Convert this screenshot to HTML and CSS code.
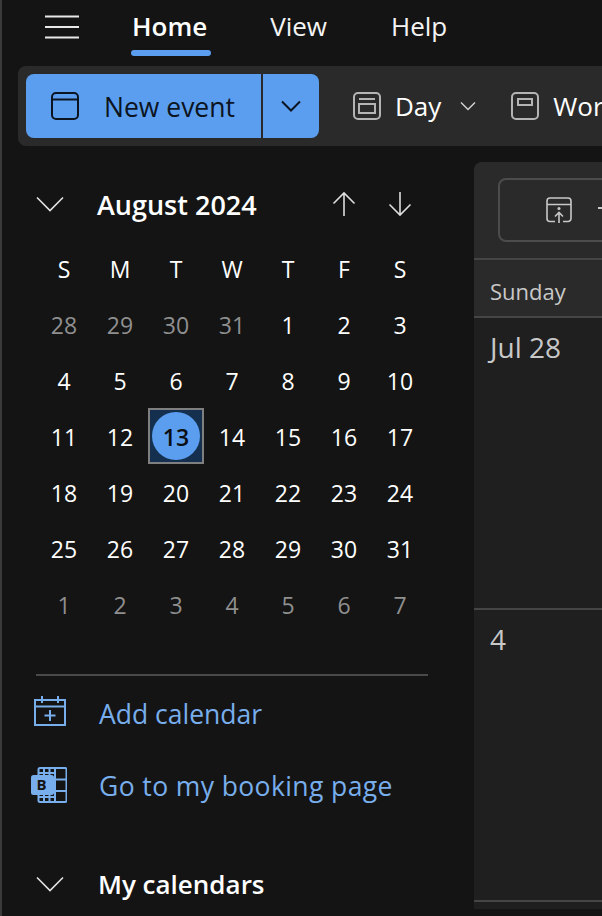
FILE: index.html
```html
<!DOCTYPE html>
<html lang="en">
<head>
    <meta charset="UTF-8">
    <meta name="viewport" content="width=device-width, initial-scale=1.0">
    <title>Calendar</title>
    <link rel="stylesheet" href="styles.css">
</head>
<body>
    <div class="app">
        <nav class="tabs">
            <svg class="menu-icon" width="34" height="24" viewBox="0 0 34 24"><path d="M0 1.5h34M0 12h34M0 22.5h34" fill="none" stroke="#e8e8e8" stroke-width="2"/></svg>
            <span class="tab active">Home</span>
            <span class="tab">View</span>
            <span class="tab">Help</span>
        </nav>

        <div class="ribbon">
            <div class="new-event">
                <div class="new-main">
                    <svg width="28" height="28" viewBox="0 0 28 28" fill="none" stroke="#0b1420" stroke-width="2"><rect x="1" y="1" width="26" height="26" rx="4"/><path d="M1 7.5h26"/></svg>
                    <span>New event</span>
                </div>
                <div class="new-drop">
                    <svg width="20" height="12" viewBox="0 0 20 12" fill="none" stroke="#0b1420" stroke-width="2"><path d="M1 1.5l9 9 9-9"/></svg>
                </div>
            </div>
            <div class="rib-item">
                <svg width="28" height="28" viewBox="0 0 28 28" fill="none" stroke="#b4b4b4" stroke-width="2"><rect x="1" y="1" width="26" height="26" rx="4"/><path d="M6 7h16"/><rect x="6" y="12" width="16" height="9"/></svg>
                <span>Day</span>
                <svg class="day-caret" width="16" height="10" viewBox="0 0 16 10" fill="none" stroke="#d0d0d0" stroke-width="1.5"><path d="M1 1.5l7 7 7-7"/></svg>
            </div>
            <div class="rib-item">
                <svg width="28" height="28" viewBox="0 0 28 28" fill="none" stroke="#b4b4b4" stroke-width="2"><rect x="1" y="1" width="26" height="26" rx="4"/><rect x="7" y="7" width="14" height="6"/></svg>
                <span>Work week</span>
            </div>
        </div>

        <div class="content">
            <aside class="side">
                <div class="month-head">
                    <svg width="28" height="16" viewBox="0 0 28 16" fill="none" stroke="#e4e4e4" stroke-width="1.6"><path d="M1 1.5l13 13 13-13"/></svg>
                    <span class="month-title">August 2024</span>
                    <div class="month-arrows">
                        <svg width="24" height="26" viewBox="0 0 24 26" fill="none" stroke="#dcdcdc" stroke-width="1.6"><path d="M12 25V2M1.5 12.5L12 2l10.5 10.5"/></svg>
                        <svg width="24" height="26" viewBox="0 0 24 26" fill="none" stroke="#dcdcdc" stroke-width="1.6"><path d="M12 1v23M1.5 13.5L12 24l10.5-10.5"/></svg>
                    </div>
                </div>

                <div class="month-grid">
                    <span class="wd">S</span><span class="wd">M</span><span class="wd">T</span><span class="wd">W</span><span class="wd">T</span><span class="wd">F</span><span class="wd">S</span>
                    <span class="d off">28</span><span class="d off">29</span><span class="d off">30</span><span class="d off">31</span><span class="d">1</span><span class="d">2</span><span class="d">3</span>
                    <span class="d">4</span><span class="d">5</span><span class="d">6</span><span class="d">7</span><span class="d">8</span><span class="d">9</span><span class="d">10</span>
                    <span class="d">11</span><span class="d">12</span><span class="d today"><b>13</b></span><span class="d">14</span><span class="d">15</span><span class="d">16</span><span class="d">17</span>
                    <span class="d">18</span><span class="d">19</span><span class="d">20</span><span class="d">21</span><span class="d">22</span><span class="d">23</span><span class="d">24</span>
                    <span class="d">25</span><span class="d">26</span><span class="d">27</span><span class="d">28</span><span class="d">29</span><span class="d">30</span><span class="d">31</span>
                    <span class="d off">1</span><span class="d off">2</span><span class="d off">3</span><span class="d off">4</span><span class="d off">5</span><span class="d off">6</span><span class="d off">7</span>
                </div>

                <div class="side-links">
                    <div class="link link-add">
                        <svg width="32" height="30" viewBox="0 0 32 30" fill="none" stroke="#78aeec" stroke-width="2"><rect x="1" y="4" width="30" height="25"/><path d="M1 10.5h30M8 0v7M24 0v7M16 14v11M10.500 19.500h11"/></svg>
                        <span>Add calendar</span>
                    </div>
                    <div class="link link-book">
                        <svg width="36" height="36" viewBox="0 0 36 36"><path d="M9 1h25a1.500 1.500 0 0 1 1.500 1.500v31a1.500 1.500 0 0 1-1.500 1.500H9a1.500 1.500 0 0 1-1.500-1.500V2.500A1.500 1.500 0 0 1 9 1z" fill="none" stroke="#78aeec" stroke-width="2"/><path d="M13 1v34M18.500 1v34M24 1v34M24 12.500h11M24 24h11M8 6h16M8 30h16" stroke="#78aeec" stroke-width="2" fill="none"/><rect x="0" y="8" width="23" height="20" rx="2.500" fill="#78aeec"/><text x="5.500" y="23" class="book-b">B</text></svg>
                        <span>Go to my booking page</span>
                    </div>
                </div>

                <div class="my-cals">
                    <svg width="28" height="16" viewBox="0 0 28 16" fill="none" stroke="#e4e4e4" stroke-width="1.6"><path d="M1 1.500l13 13 13-13"/></svg>
                    <span>My calendars</span>
                </div>
            </aside>

            <main class="panel">
                <div class="panel-tools">
                    <div class="share-btn">
                        <svg width="26" height="26" viewBox="0 0 26 26" fill="none" stroke="#c8c8c8" stroke-width="1.600"><path d="M9 24.500H4a3 3 0 0 1-3-3V4a3 3 0 0 1 3-3h18a3 3 0 0 1 3 3v17.500a3 3 0 0 1-3 3h-5M1 7.500h24M13 26V16M9 19.500l4-4 4 4"/><circle cx="13" cy="11.500" r=".8" fill="#c8c8c8"/></svg>
                        <i class="plus-stub"></i>
                    </div>
                </div>
                <div class="day-head">Sunday</div>
                <div class="day-cell">Jul 28</div>
                <div class="day-cell">4</div>
            </main>
        </div>
    </div>
</body>
</html>
```

FILE: styles.css
```css
* {
    box-sizing: border-box;
}
html, body {
    height: 100%;
    margin: 0;
}
body {
    font-family: "Open Sans", "Noto Sans", sans-serif;
    background: #141414;
    color: #fff;
    overflow: hidden;
}
.app {
    width: 602px;
    height: 916px;
    border-left: 2px solid #3b3b3b;
    overflow: hidden;
}

/* top tabs */
.tabs {
    display: flex;
    align-items: center;
    height: 66px;
    padding: 0 0 12px 43px;
}
.menu-icon {
    margin-right: 53px;
}
.tab {
    position: relative;
    top: -1px;
    font-size: 26px;
    margin-right: 64px;
    color: #f4f4f4;
}
.tab.active {
    font-weight: 600;
    margin-right: 63px;
    color: #fff;
}
.tab.active::after {
    content: "";
    position: absolute;
    left: -1px;
    right: -4px;
    bottom: -12px;
    height: 6px;
    border-radius: 3px;
    background: #5b9ef0;
}

/* ribbon */
.ribbon {
    display: flex;
    align-items: center;
    height: 80px;
    margin-left: 16px;
    padding-left: 8px;
    background: #2a2a2a;
    border-radius: 8px 0 0 8px;
    white-space: nowrap;
}
.new-event {
    display: flex;
    flex: none;
    width: 293px;
    height: 64px;
    background: #5b9ef0;
    border-radius: 8px;
    color: #0b1420;
    font-size: 26.5px;
}
.new-main {
    display: flex;
    align-items: center;
    gap: 25px;
    width: 237px;
    padding-left: 25px;
    border-right: 2px solid #2a2a2a;
}
.new-main span {
    padding-top: 2px;
}
.new-drop {
    display: flex;
    align-items: center;
    justify-content: center;
    flex: 1;
}
.rib-item {
    display: flex;
    flex: none;
    align-items: center;
    gap: 14px;
    margin-left: 34px;
    font-size: 26px;
}
.rib-item + .rib-item {
    margin-left: 35px;
}
.day-caret {
    margin-left: 5px;
}

/* left column */
.content {
    display: flex;
    padding-top: 16px;
}
.side {
    width: 472px;
    flex: none;
    padding: 15px 0 0 34px;
}
.month-head {
    display: flex;
    align-items: center;
    width: 392px;
    height: 54px;
}
.month-title {
    font-size: 27px;
    font-weight: 600;
    margin-left: 33px;
}
.month-arrows {
    display: flex;
    gap: 32px;
    margin-left: auto;
    margin-right: 16px;
}
.month-grid {
    display: grid;
    grid-template-columns: repeat(7, 56px);
    grid-auto-rows: 56px;
    margin-top: 9px;
    width: 392px;
    padding-bottom: 42px;
    border-bottom: 2px solid #4a4a4a;
    font-size: 23px;
}
.wd, .d {
    display: flex;
    align-items: center;
    justify-content: center;
    padding-top: 2px;
}
.off {
    color: #8f8f8f;
}
.today {
    padding-top: 0;
    border: 2px solid #7f7f7f;
    background: #15304f;
}
.today b {
    display: flex;
    align-items: center;
    justify-content: center;
    width: 48px;
    height: 48px;
    padding-top: 2px;
    border-radius: 50%;
    background: #5b9ef0;
    color: #0b0f14;
    font-weight: 600;
}
.side-links {
    padding-top: 1px;
}
.link {
    display: flex;
    align-items: center;
    height: 73px;
    color: #78aeec;
    font-size: 26.5px;
}
.link-add {
    height: 72px;
}
.link-add span {
    margin-left: 33px;
    padding-top: 2px;
}
.link-add svg {
    margin: -4px 0 0 -2px;
}
.link-book svg {
    margin: -2px 0 0 -5px;
}
.link-book span {
    margin-left: 32px;
    letter-spacing: 0.4px;
}
.book-b {
    font: 700 15px "Open Sans", sans-serif;
    fill: #141414;
}
.my-cals {
    display: flex;
    align-items: center;
    gap: 34px;
    height: 50px;
    margin-top: 37px;
    font-size: 26px;
    font-weight: 600;
}

/* calendar panel */
.panel {
    flex: 1;
    background: #1f1f1f;
    border-radius: 8px 0 0 0;
    color: #c8c8c8;
}
.panel-tools {
    height: 98px;
    padding: 16px 0 0 24px;
    background: #2a2a2a;
    border-bottom: 2px solid #454545;
    border-radius: 8px 0 0 0;
}
.share-btn {
    display: flex;
    align-items: center;
    width: 200px;
    height: 64px;
    padding-left: 46px;
    border: 2px solid #4c4c4c;
    border-radius: 8px;
}
.plus-stub {
    width: 12px;
    height: 2px;
    margin: 0 0 4px 26px;
    background: #c8c8c8;
}
.day-head {
    height: 58px;
    padding: 16px 0 0 16px;
    font-size: 22px;
    background: #2a2a2a;
    border-bottom: 2px solid #454545;
}
.day-cell {
    height: 292px;
    padding: 10px 0 0 16px;
    font-size: 28px;
    border-bottom: 2px solid #454545;
}
```
